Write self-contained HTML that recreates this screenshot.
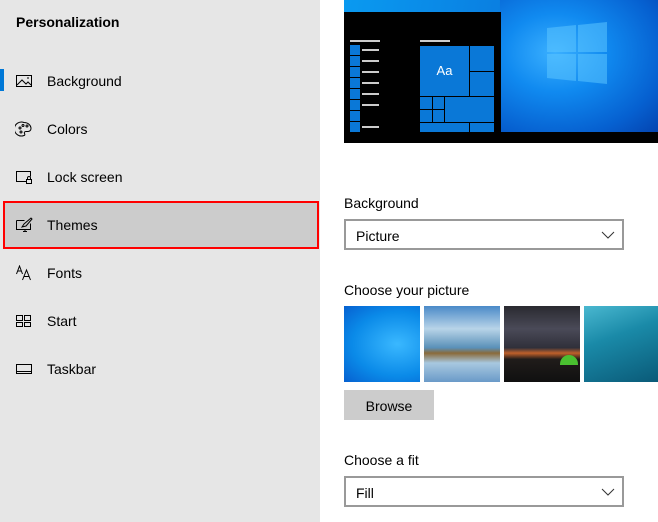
<!DOCTYPE html>
<html><head><style>
body{margin:0;width:658px;height:522px;overflow:hidden;background:#fff;font-family:"Liberation Sans",sans-serif;color:#000;position:relative}
.side{position:absolute;left:0;top:0;width:320px;height:522px;background:#e6e6e6}
.t{position:absolute;font-size:14px;line-height:18px}
.item{position:absolute;left:0;width:320px;height:48px}
.item span{position:absolute;left:47px;top:16px;font-size:14px}
.item svg{position:absolute;left:15px;top:16px}
.a{position:absolute}
</style></head><body>
<div class="side">
<div class="t" style="left:16px;top:13px;font-weight:bold;font-size:14px">Personalization</div>
<div class="a" style="left:0;top:69px;width:4px;height:22px;background:#0078d7"></div>
<div class="item" style="top:57px"><svg width="18" height="16" fill="none" stroke="#000"><rect x="1.5" y="2.5" width="15" height="11"/><path d="M2 12l5-5 4 4 2-2 3 3M12 5h2"/></svg><span>Background</span></div>
<div class="item" style="top:105px"><svg width="18" height="16" fill="none" stroke="#000"><path d="M9 1.5a7 7 0 1 0 0 13c1 0 1-1 .5-2s0-2 1.5-2h2a3 3 0 0 0 3-3 7 6 0 0 0-7-6z"/><circle cx="5" cy="7" r="1"/><circle cx="8" cy="4.5" r="1"/><circle cx="12" cy="5" r="1"/><circle cx="6" cy="11" r="1"/></svg><span>Colors</span></div>
<div class="item" style="top:153px"><svg width="18" height="16" fill="none" stroke="#000"><path d="M11 12.5H1.5v-10h14v5"/><rect x="11.5" y="10.5" width="5" height="4"/><path d="M12.5 10.5v-1.5a1.5 1.5 0 0 1 3 0v1.5"/></svg><span>Lock screen</span></div>
<div class="a" style="left:3px;top:201px;width:312px;height:44px;background:#cccccc;border:2px solid #f00"></div>
<div class="item" style="top:201px"><svg width="18" height="16" fill="none" stroke="#000"><path d="M1.5 3.5h8M1.5 3.5v9h14v-6M8 14.5h4M10 12.5v2"/><path d="M7 10l2-3 7-6 1 1-6 7z"/></svg><span>Themes</span></div>
<div class="item" style="top:249px"><svg width="18" height="16" fill="none" stroke="#000"><path d="M1.5 9l3-8 3 8M2.5 6h4M7.5 15l4-10 4 10M9 11.5h5"/></svg><span>Fonts</span></div>
<div class="item" style="top:297px"><svg width="18" height="16" fill="none" stroke="#000"><rect x="1.5" y="2.5" width="6" height="5"/><rect x="9.5" y="2.5" width="6" height="5"/><rect x="1.5" y="9.5" width="6" height="4"/><rect x="9.5" y="9.5" width="6" height="4"/></svg><span>Start</span></div>
<div class="item" style="top:345px"><svg width="18" height="16" fill="none" stroke="#000"><rect x="1.5" y="3.5" width="15" height="9"/><path d="M2 10.5h14"/></svg><span>Taskbar</span></div>
</div>

<div class="a" style="left:344px;top:0;width:314px;height:143px;background:linear-gradient(100deg,#0a9af0 0%,#0a7de0 50%,#0a52c0 100%)"></div>
<div class="a" style="left:500px;top:0;width:158px;height:132px;background:radial-gradient(ellipse at 35% 40%,#3bb0ff 0%,#108af0 35%,#0660d0 75%,#0444b0 100%)"></div>
<svg class="a" style="left:547px;top:22px" width="62" height="62"><path d="M0 6l29-3v27H0zM31 3l29-3v30H31zM0 32h29v27L0 56zM31 32h29v30l-29-3z" fill="#5bc4ff" opacity=".55"/></svg>
<div class="a" style="left:344px;top:132px;width:314px;height:11px;background:#000"></div>
<div class="a" style="left:344px;top:12px;width:157px;height:121px;background:#000"></div>
<div class="a" style="left:350px;top:40px;width:30px;height:2px;background:#ccc"></div>
<div class="a" style="left:420px;top:40px;width:30px;height:2px;background:#ccc"></div>
<div class="a" style="left:350px;top:45px;width:10px;height:87px;background:repeating-linear-gradient(#0a78d7 0 10px,#000 10px 11px)"></div>
<div class="a" style="left:362px;top:49px;width:17px;height:80px;background:repeating-linear-gradient(#ccc 0 2px,transparent 2px 11px)"></div>
<div class="a" style="left:362px;top:115px;width:8px;height:2px;background:#000"></div>
<div class="a" style="left:370px;top:115px;width:10px;height:2px;background:#000"></div>
<div class="a" style="left:420px;top:46px;width:49px;height:50px;background:#0a78d7;color:#fff;font-size:13px;text-align:center;line-height:50px">Aa</div>
<div class="a" style="left:470px;top:46px;width:24px;height:25px;background:#0a78d7"></div>
<div class="a" style="left:470px;top:72px;width:24px;height:24px;background:#0a78d7"></div>
<div class="a" style="left:420px;top:97px;width:12px;height:12px;background:#0a78d7"></div>
<div class="a" style="left:433px;top:97px;width:11px;height:12px;background:#0a78d7"></div>
<div class="a" style="left:420px;top:110px;width:12px;height:12px;background:#0a78d7"></div>
<div class="a" style="left:433px;top:110px;width:11px;height:12px;background:#0a78d7"></div>
<div class="a" style="left:445px;top:97px;width:49px;height:25px;background:#0a78d7"></div>
<div class="a" style="left:420px;top:123px;width:49px;height:9px;background:#0a78d7"></div>
<div class="a" style="left:470px;top:123px;width:24px;height:9px;background:#0a78d7"></div>

<div class="t" style="left:344px;top:194px">Background</div>
<div class="a" style="left:344px;top:219px;width:276px;height:27px;border:2px solid #999"></div>
<div class="t" style="left:356px;top:227px">Picture</div>
<svg class="a" style="left:601px;top:231px" width="14" height="9"><path d="M1 1l6 6 6-6" fill="none" stroke="#333"/></svg>

<div class="t" style="left:344px;top:281px">Choose your picture</div>
<div class="a" style="left:344px;top:306px;width:76px;height:76px;background:radial-gradient(ellipse at 70% 50%,#3ab8ff,#0a8ae8 60%,#0660d0)"></div>
<div class="a" style="left:424px;top:306px;width:76px;height:76px;background:linear-gradient(#4a8ac8 0%,#b8d4e8 30%,#5a90b8 55%,#8a6a3a 62%,#a8c8e0 75%,#6a9ac8 100%)"></div>
<div class="a" style="left:504px;top:306px;width:76px;height:76px;background:linear-gradient(#2a2a30 0%,#4a4a58 30%,#30303a 55%,#c0602a 62%,#201c1a 70%,#101010 100%)"></div>
<div class="a" style="left:560px;top:355px;width:18px;height:10px;background:#4ac030;border-radius:10px 10px 0 0"></div>
<div class="a" style="left:584px;top:306px;width:74px;height:76px;background:linear-gradient(160deg,#4ab8d0 0%,#1a8aa8 40%,#0a5a78 100%)"></div>
<div class="a" style="left:344px;top:390px;width:90px;height:30px;background:#ccc;font-size:14px;text-align:center;line-height:32px">Browse</div>

<div class="t" style="left:344px;top:451px">Choose a fit</div>
<div class="a" style="left:344px;top:476px;width:276px;height:27px;border:2px solid #999"></div>
<div class="t" style="left:356px;top:484px">Fill</div>
<svg class="a" style="left:601px;top:488px" width="14" height="9"><path d="M1 1l6 6 6-6" fill="none" stroke="#333"/></svg>
</body></html>
